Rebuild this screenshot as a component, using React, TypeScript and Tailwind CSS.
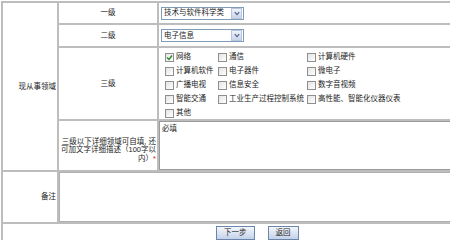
const items = [
  ['网络', '通信', '计算机硬件'],
  ['计算机软件', '电子器件', '微电子'],
  ['广播电视', '信息安全', '数字音视频'],
  ['智能交通', '工业生产过程控制系统', '高性能、智能化仪器仪表'],
  ['其他'],
];

const Check = ({ checked }: { checked?: boolean }) => (
  <span className="w-[9px] h-[9px] mr-[2px] border border-[#8f8f8f] bg-gradient-to-br from-[#e4e4e4] to-white flex items-center justify-center shrink-0">
    {checked && (
      <svg width="7" height="7" viewBox="0 0 7 7">
        <path d="M1 3.5 L3 5.5 L6 1.5" stroke="#2a8a2a" strokeWidth="1.4" fill="none" />
      </svg>
    )}
  </span>
);

const Select = ({ value }: { value: string }) => (
  <div className="w-[83px] h-[13px] border border-[#7f9db9] bg-white flex items-center">
    <span className="flex-1 pl-[2px] leading-none">{value}</span>
    <span className="w-[11px] h-[11px] mr-[1px] border border-[#b9c6dc] bg-gradient-to-b from-[#eef2f9] to-[#c9d5ea] flex items-center justify-center">
      <svg width="6" height="5" viewBox="0 0 6 5">
        <path d="M0.8 1.2 L3 3.6 L5.2 1.2" stroke="#4d6185" strokeWidth="1.2" fill="none" />
      </svg>
    </span>
  </div>
);

const Btn = ({ children }: { children: string }) => (
  <button className="h-[14px] px-[7px] border border-[#6c86ab] bg-gradient-to-b from-[#f4f7fc] to-[#c3d2ea] text-[7.5px] leading-none text-[#222]">
    {children}
  </button>
);

export default function App() {
  return (
    <div className="w-[450px] h-[240px] overflow-hidden bg-white text-[7.5px] leading-none text-[#222] font-['Liberation_Sans','Noto_Sans_CJK_SC',sans-serif] pt-[1px] pl-[1px]">
      {/* 现从事领域 */}
      <div className="flex border-t-2 border-l-2 border-b-2 border-[#bdbdbd]">
        <div className="w-[56px] border-r-2 border-[#bdbdbd] flex items-center justify-end pr-[1px]">现从事领域</div>
        <div className="flex-1 flex flex-col">
          <div className="h-[22px] flex border-b-2 border-[#bdbdbd]">
            <div className="w-[100px] border-r-2 border-[#bdbdbd] flex items-center justify-center">一级</div>
            <div className="flex-1 flex items-center pl-[2px]">
              <Select value="技术与软件科学类" />
            </div>
          </div>
          <div className="h-[23px] flex border-b-2 border-[#bdbdbd]">
            <div className="w-[100px] border-r-2 border-[#bdbdbd] flex items-center justify-center">二级</div>
            <div className="flex-1 flex items-center pl-[2px]">
              <Select value="电子信息" />
            </div>
          </div>
          <div className="h-[73px] flex border-b-2 border-[#bdbdbd]">
            <div className="w-[100px] border-r-2 border-[#bdbdbd] flex items-center justify-center">三级</div>
            <div className="flex-1 pl-[6px] pt-[2px] grid grid-cols-[53px_89px_1fr] auto-rows-[14px]">
              {items.flat().map((t, i) => (
                <div key={t} className="flex items-center whitespace-nowrap">
                  <Check checked={i === 0} />
                  <span>{t}</span>
                </div>
              ))}
            </div>
          </div>
          <div className="h-[49px] flex">
            <div className="w-[100px] border-r-2 border-[#bdbdbd] flex items-center justify-end pr-[1px] pt-[10px]">
              <p className="text-right leading-[8.5px]">
                三级以下详细领域可自填, 还<br />
                可加文字详细描述（100字以<br />
                内）<span className="text-[#e02020]">*</span>
              </p>
            </div>
            <div className="flex-1 border border-[#9a9a9a] border-r-0 pl-[2px] pt-[3px]">必填</div>
          </div>
        </div>
      </div>
      {/* 备注 */}
      <div className="h-[52px] flex border-l-2 border-b-2 border-[#bdbdbd]">
        <div className="w-[56px] border-r-2 border-[#bdbdbd] flex items-center justify-end pr-[1px]">备注</div>
        <div className="flex-1 border border-[#b0b0b0] border-r-0 bg-white" />
      </div>
      <div className="h-[16px] border-l-2 border-[#bdbdbd] flex items-end pl-[213px] gap-[13px]">
        <Btn>下一步</Btn>
        <Btn>返回</Btn>
      </div>
    </div>
  );
}
